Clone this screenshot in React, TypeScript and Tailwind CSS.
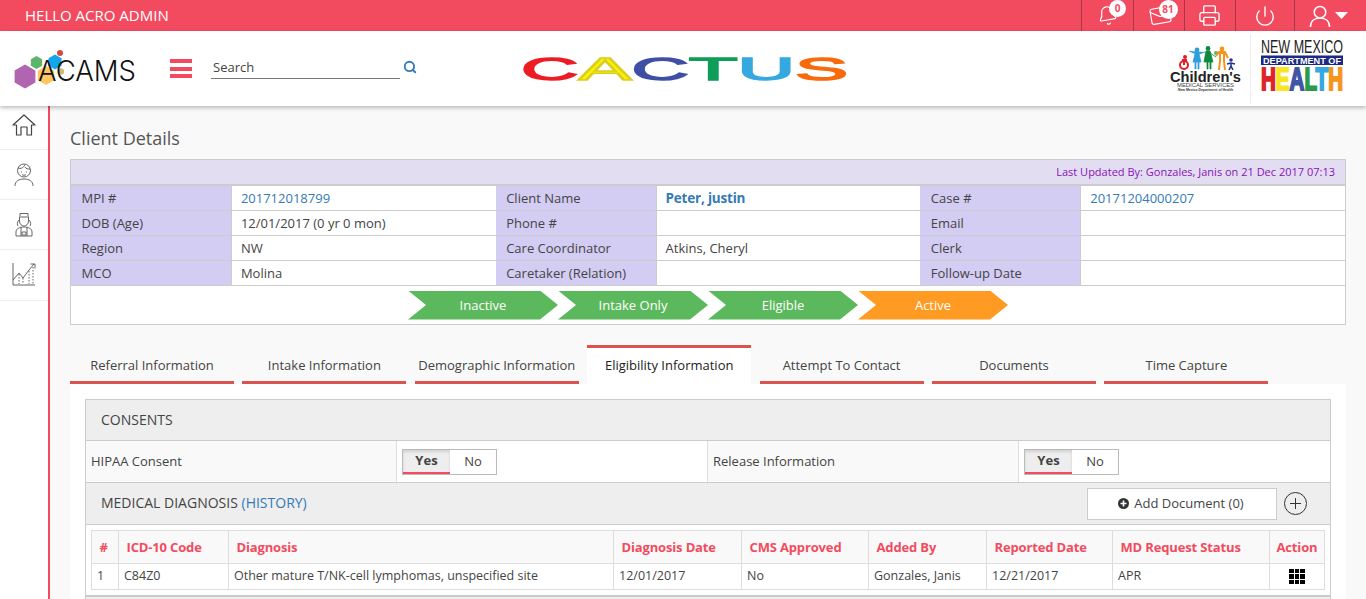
import { Bell, Mail, Printer, Power, Search } from 'lucide-react';

const infoRows = [
  ['MPI #', '201712018799', 'Client Name', 'Peter, justin', 'Case #', '20171204000207'],
  ['DOB (Age)', '12/01/2017 (0 yr 0 mon)', 'Phone #', '', 'Email', ''],
  ['Region', 'NW', 'Care Coordinator', 'Atkins, Cheryl', 'Clerk', ''],
  ['MCO', 'Molina', 'Caretaker (Relation)', '', 'Follow-up Date', ''],
];

const steps = [
  { label: 'Inactive', active: false },
  { label: 'Intake Only', active: false },
  { label: 'Eligible', active: false },
  { label: 'Active', active: true },
];

const tabs = [
  'Referral Information',
  'Intake Information',
  'Demographic Information',
  'Eligibility Information',
  'Attempt To Contact',
  'Documents',
  'Time Capture',
];

const columns = [
  { title: '#', width: 'w-[27px]', value: '1' },
  { title: 'ICD-10 Code', width: 'w-[110px]', value: 'C84Z0' },
  { title: 'Diagnosis', width: 'w-[385px]', value: 'Other mature T/NK-cell lymphomas, unspecified site' },
  { title: 'Diagnosis Date', width: 'w-[128px]', value: '12/01/2017' },
  { title: 'CMS Approved', width: 'w-[127px]', value: 'No' },
  { title: 'Added By', width: 'w-[118px]', value: 'Gonzales, Janis' },
  { title: 'Reported Date', width: 'w-[126px]', value: '12/21/2017' },
  { title: 'MD Request Status', width: 'w-[157px]', value: 'APR' },
];

function Hex({ cx, cy, r, fill }: { cx: number; cy: number; r: number; fill: string }) {
  const h = r * 0.866;
  return (
    <polygon
      points={`${cx},${cy - r} ${cx + h},${cy - r / 2} ${cx + h},${cy + r / 2} ${cx},${cy + r} ${cx - h},${cy + r / 2} ${cx - h},${cy - r / 2}`}
      fill={fill}
    />
  );
}

function AcamsLogo() {
  return (
    <svg width="124" height="44" viewBox="0 0 124 44" className="ml-[14px] shrink-0">
      <Hex cx={11} cy={29.5} r={12} fill="#b065b1" />
      <Hex cx={22.5} cy={15.5} r={6.5} fill="#5cb56a" />
      <Hex cx={41} cy={15} r={7.5} fill="#12a7e8" />
      <Hex cx={32} cy={28.5} r={9.5} fill="#fdc766" />
      <Hex cx={47} cy={24.5} r={3.5} fill="#d4b878" />
      <circle cx="46" cy="6" r="3" fill="#d9463f" />
      <text x="24" y="33.5" fontFamily="Inter, sans-serif" fontWeight="300" fontSize="28" fill="#111" textLength="98" lengthAdjust="spacingAndGlyphs">
        ACAMS
      </text>
    </svg>
  );
}

function CactusLogo() {
  return (
    <svg width="322" height="40" viewBox="0 0 322 40" className="shrink-0 overflow-visible">
      <text
        x="-3"
        y="31"
        fontFamily="'Liberation Sans', sans-serif"
        fontSize="32"
        strokeWidth="1.4"
        textLength="327"
        lengthAdjust="spacingAndGlyphs"
      >
        <tspan fill="#ed1c24" stroke="#ed1c24">C</tspan>
        <tspan fill="#fff200" stroke="#d8cf20">A</tspan>
        <tspan fill="#3f4fa5" stroke="#3f4fa5">C</tspan>
        <tspan fill="#0f9d58" stroke="#0f9d58">T</tspan>
        <tspan fill="#35a8e0" stroke="#35a8e0">U</tspan>
        <tspan fill="#f96a0c" stroke="#f96a0c">S</tspan>
      </text>
    </svg>
  );
}

function ChildrensLogo() {
  return (
    <svg width="72" height="46" viewBox="0 0 72 46" className="shrink-0 overflow-visible">
      {/* wheelchair kid */}
      <circle cx="15" cy="11" r="2" fill="#e31e26" />
      <circle cx="14" cy="19" r="4" fill="none" stroke="#e31e26" strokeWidth="2" />
      <path d="M12 14h5M14 13v6" stroke="#e31e26" strokeWidth="2" />
      {/* blue girl */}
      <circle cx="27" cy="4" r="2.4" fill="#2d9fd9" />
      <path d="M19 5l7 3h3l6-2M25 8h4l2 8h-2v7h-1v-7h-2v7h-1v-7h-2z" fill="#2d9fd9" stroke="#2d9fd9" strokeWidth="0.8" />
      {/* green girl */}
      <circle cx="38" cy="2.500" r="2.4" fill="#0e8a3e" />
      <path d="M36 5h4l3 11h-2v7h-1v-7h-2v7h-1v-7h-3zM40 7l6 4" fill="#0e8a3e" stroke="#0e8a3e" strokeWidth="0.8" />
      <circle cx="46" cy="7" r="2" fill="#5cb56a" />
      {/* orange adult */}
      <circle cx="52" cy="3" r="2.4" fill="#f7941d" />
      <path d="M46 10l3-4h6l3 6M50 7h4v8l1 9M50 7v8l-1 9" fill="none" stroke="#f7941d" strokeWidth="2" />
      {/* small navy kid */}
      <circle cx="61" cy="14" r="1.8" fill="#23358f" />
      <path d="M57 18l4-1 4 1M61 17v3l-2 4M61 20l2 4" fill="none" stroke="#23358f" strokeWidth="1.6" />
      <text x="0" y="36" fontFamily="'Liberation Sans', sans-serif" fontWeight="700" fontSize="15.500" fill="#222" textLength="71" lengthAdjust="spacingAndGlyphs">
        Children's
      </text>
      <text x="7" y="41" fontFamily="'Liberation Sans', sans-serif" fontSize="6" fill="#444" textLength="57" lengthAdjust="spacingAndGlyphs">
        MEDICAL SERVICES
      </text>
      <text x="8" y="44.500" fontFamily="'Liberation Sans', sans-serif" fontWeight="700" fontSize="3.500" fill="#333" textLength="55" lengthAdjust="spacingAndGlyphs">
        New Mexico Department of Health
      </text>
    </svg>
  );
}

function HealthLogo() {
  return (
    <svg width="82" height="52" viewBox="0 0 82 52" className="mb-[5px] shrink-0 overflow-visible">
      <text x="0" y="13" fontFamily="'Liberation Sans', sans-serif" fontSize="17.500" fill="#222" textLength="82" lengthAdjust="spacingAndGlyphs">
        NEW MEXICO
      </text>
      <rect x="0" y="15.500" width="82" height="9.500" fill="#1c2a80" />
      <text x="2" y="23.500" fontFamily="'Liberation Sans', sans-serif" fontWeight="700" fontSize="9.500" fill="#fff" textLength="78" lengthAdjust="spacingAndGlyphs">
        DEPARTMENT OF
      </text>
      <text
        x="0"
        y="50"
        fontFamily="'Liberation Sans', sans-serif"
        fontWeight="700"
        fontSize="31"
        strokeWidth="2"
        textLength="82"
        lengthAdjust="spacingAndGlyphs"
      >
        <tspan fill="#e0232a" stroke="#e0232a">H</tspan>
        <tspan fill="#f7e723" stroke="#f7e723">E</tspan>
        <tspan fill="#3f56a6" stroke="#3f56a6">A</tspan>
        <tspan fill="#2c9b47" stroke="#2c9b47">L</tspan>
        <tspan fill="#35a8e0" stroke="#35a8e0">T</tspan>
        <tspan fill="#f7941d" stroke="#f7941d">H</tspan>
      </text>
    </svg>
  );
}

function HomeIcon() {
  return (
    <svg width="24" height="22" viewBox="0 0 24 22" fill="none" stroke="#444" strokeWidth="1.2">
      <path d="M1 11L12 1l11 10h-3.5v10h-4.5v-8H9v8H4.5V11z" strokeLinejoin="round" />
    </svg>
  );
}

function ChildIcon() {
  return (
    <svg width="20" height="24" viewBox="0 0 20 24" fill="none" stroke="#555" strokeWidth="0.9">
      <circle cx="10" cy="7.5" r="6.5" />
      <path d="M4 5c3 1 5 0 7-3M11 4c1 2 3 2 5 2M7 9h1M12 9h1M8 11.5c1 1 3 1 4 0" />
      <path d="M1 23c0-5 4-7 9-7s9 2 9 7" />
    </svg>
  );
}

function NurseIcon() {
  return (
    <svg width="18" height="25" viewBox="0 0 18 25" fill="none" stroke="#555" strokeWidth="0.9">
      <path d="M5 4V1.500h8V4M4 5h10" />
      <path d="M4.500 5v4c0 3 2 5 4.500 5s4.500-2 4.500-5V5" />
      <path d="M4 8c-2 2-2 5-1 6M14 8c2 2 2 5 1 6" />
      <path d="M1 24v-4c0-3 3-5 8-5s8 2 8 5v4z" />
      <path d="M6 15v9M12 15v9M7 20h4v3H7z" />
    </svg>
  );
}

function ChartIcon() {
  return (
    <svg width="24" height="24" viewBox="0 0 24 24" fill="none" stroke="#555" strokeWidth="0.9">
      <path d="M1 1v22h22" />
      <path d="M1 18l6-7 4 5 6-8 5-6M18.500 2H23v4.500" />
      <path d="M7 12v10M11 16v6M17 9v13M21 5v17" strokeDasharray="1.500 1.500" />
    </svg>
  );
}

function Toggle() {
  return (
    <div className="flex h-[26px] w-[95px] border border-[#bbbbbb] bg-white text-[13px] text-[#444]">
      <div className="flex w-[47px] items-center justify-center border-b-2 border-[#f24b60] bg-[#eeeeee] font-bold shadow-[inset_0_2px_3px_rgba(0,0,0,0.12)]">
        Yes
      </div>
      <div className="flex flex-1 items-center justify-center">No</div>
    </div>
  );
}

export default function App() {
  return (
    <div className="flex h-[599px] w-[1366px] flex-col overflow-hidden bg-[#f9f9f9] font-['Open_Sans',sans-serif] text-[13px] text-[#444]">
      {/* Top bar */}
      <div className="flex h-[31px] shrink-0 items-center justify-between bg-[#f24b60] text-white">
        <span className="pl-[25px] text-[15px]">HELLO ACRO ADMIN</span>
        <div className="flex h-full">
          <div className="flex h-full w-[52px] items-center justify-center border-l border-[#a93645]">
            <div className="relative">
              <Bell size={21} strokeWidth={1.3} className="rotate-[-10deg]" />
              <span className="absolute left-[12px] top-[-5px] flex h-[17px] w-[17px] items-center justify-center rounded-full bg-white text-[10px] font-bold text-[#f24b60]">
                0
              </span>
            </div>
          </div>
          <div className="flex h-full w-[51px] items-center justify-center border-l border-[#a93645]">
            <div className="relative ml-[2px]">
              <Mail size={23} strokeWidth={1.2} className="rotate-[-10deg]" />
              <span className="absolute left-[10px] top-[-4px] flex h-[19px] w-[19px] items-center justify-center rounded-full bg-white text-[10px] font-bold text-[#f24b60]">
                81
              </span>
            </div>
          </div>
          <div className="flex h-full w-[51px] items-center justify-center border-l border-[#a93645]">
            <Printer size={23} strokeWidth={1.4} className="-ml-[2px]" />
          </div>
          <div className="flex h-full w-[59px] items-center justify-center border-l border-[#a93645]">
            <Power size={22} strokeWidth={1.5} />
          </div>
          <div className="flex h-full w-[72px] items-center gap-[4px] border-l border-[#a93645] pl-[14px]">
            <svg width="22" height="22" viewBox="0 0 22 23" fill="none" stroke="white" strokeWidth="1.600">
              <circle cx="11" cy="7.500" r="6" />
              <path d="M1 23c0-6 4-9.500 10-9.500s10 3.500 10 9.500" />
            </svg>
            <svg width="13" height="7" viewBox="0 0 13 7" fill="white">
              <path d="M0 0h13L6.500 7z" />
            </svg>
          </div>
        </div>
      </div>

      {/* Header */}
      <div className="relative z-10 flex h-[75px] shrink-0 items-center bg-white shadow-[0_2px_4px_rgba(0,0,0,0.25)]">
        <AcamsLogo />
        <div className="ml-[32px] flex w-[22px] shrink-0 flex-col gap-[3.5px]">
          <span className="h-[4px] bg-[#f24b60]" />
          <span className="h-[4px] bg-[#f24b60]" />
          <span className="h-[4px] bg-[#f24b60]" />
        </div>
        <div className="mb-[2px] ml-[19px] flex w-[189px] shrink-0 border-b border-[#777777] pl-[2px]">
          <input placeholder="Search" className="h-[21px] w-full bg-transparent text-[13px] outline-none placeholder:text-[#444]" />
        </div>
        <Search size={14} strokeWidth={3.2} className="ml-[3px] mt-[-4px] shrink-0 text-[#337ab7]" />
        <div className="ml-[107px]">
          <CactusLogo />
        </div>
        <div className="ml-[324px]">
          <ChildrensLogo />
        </div>
        <div className="ml-[8px] flex h-[70px] items-center border-l border-[#eeeeee] pl-[10px]">
          <HealthLogo />
        </div>
      </div>

      <div className="flex min-h-0 flex-1">
        {/* Sidebar */}
        <div className="flex w-[50px] shrink-0 flex-col border-r-2 border-[#f24b60] bg-white">
          <div className="flex h-[44px] items-center justify-center border-b border-[#eeeeee] pb-[6px]">
            <HomeIcon />
          </div>
          <div className="flex h-[50px] items-center justify-center border-b border-[#eeeeee]">
            <ChildIcon />
          </div>
          <div className="flex h-[50px] items-center justify-center border-b border-[#eeeeee]">
            <NurseIcon />
          </div>
          <div className="flex h-[51px] items-center justify-center border-b border-[#eeeeee] pb-[2px]">
            <ChartIcon />
          </div>
        </div>

        {/* Main */}
        <div className="min-w-0 flex-1 pl-5 pr-5 pt-[19px]">
          <h1 className="mb-[8px] text-[18px] leading-[26px] text-[#555]">Client Details</h1>

          {/* Client panel */}
          <div className="border border-[#cccccc] bg-white">
            <div className="flex h-[26px] items-center justify-end border-b-2 border-[#cccccc] bg-[#e2ddf1] pr-[10px] text-[11px] text-[#8a12b8]">
              Last Updated By: Gonzales, Janis on 21 Dec 2017 07:13
            </div>
            {infoRows.map((row) => (
              <div key={row[0]} className="flex h-[25px] border-b border-[#cccccc]">
                {row.map((cell, i) =>
                  i % 2 === 0 ? (
                    <div key={i} className="flex w-[160px] items-center bg-[#d3ccf3] pl-[10.5px] pt-[1px] text-[#444]">
                      {cell}
                    </div>
                  ) : (
                    <div
                      key={i}
                      className={`flex w-[265px] items-center border-l border-[#cccccc] pl-[9px] pt-[1px] ${
                        cell === 'Peter, justin'
                          ? 'text-[13.500px] font-bold tracking-[-0.2px] text-[#337ab7]'
                          : /^\d+$/.test(cell)
                            ? 'text-[#337ab7]'
                            : 'text-[#444]'
                      }`}
                    >
                      {cell}
                    </div>
                  ),
                )}
              </div>
            ))}
            <div className="flex h-[38px] items-center justify-center">
              {steps.map((step) => (
                <div
                  key={step.label}
                  className={`flex h-[29px] w-[150px] items-center justify-center pt-[1px] text-white [clip-path:polygon(0_0,132px_0,100%_50%,132px_100%,0_100%,18px_50%)] ${
                    step.active ? 'bg-[#ff9a22]' : 'bg-[#5cb85c]'
                  }`}
                >
                  {step.label}
                </div>
              ))}
            </div>
          </div>

          {/* Tabs */}
          <div className="mt-5 flex gap-[8.4px]">
            {tabs.map((tab) =>
              tab === 'Eligibility Information' ? (
                <div key={tab} className="flex h-[39px] w-[164px] items-center justify-center border-t-[3px] border-[#d9534f] bg-white pb-[1px] text-[#222]">
                  {tab}
                </div>
              ) : (
                <div key={tab} className="flex h-[39px] w-[164px] items-center justify-center whitespace-nowrap border-b-[3px] border-[#d9534f] pt-[6px] text-[#444]">
                  {tab}
                </div>
              ),
            )}
          </div>

          {/* Eligibility panel */}
          <div className="h-[300px] bg-white p-[15px]">
            <div className="border border-[#cccccc]">
              <div className="flex h-[41px] items-center border-b border-[#cccccc] bg-[#eeeeee] pb-[1px] pl-[15px] text-[14px]">CONSENTS</div>
              <div className="flex h-[42px] border-b border-[#cccccc]">
                <div className="flex w-[311px] items-center border-r border-[#dddddd] bg-[#f9f9f9] pl-[5px]">HIPAA Consent</div>
                <div className="flex w-[311px] items-center border-r border-[#dddddd] pl-[5px]">
                  <Toggle />
                </div>
                <div className="flex w-[311px] items-center border-r border-[#dddddd] bg-[#f9f9f9] pl-[5px]">Release Information</div>
                <div className="flex w-[311px] items-center pl-[5px]">
                  <Toggle />
                </div>
              </div>
              <div className="flex h-[42px] items-center justify-between border-b border-[#cccccc] bg-[#eeeeee] pl-[15px] pr-[23px] text-[14px]">
                <span className="mb-[2px]">
                  MEDICAL DIAGNOSIS <span className="text-[#337ab7]">(HISTORY)</span>
                </span>
                <div className="flex items-center gap-[7px]">
                  <div className="flex h-[32px] w-[190px] items-center justify-center gap-[5px] border border-[#cccccc] bg-white pr-[2px] text-[13px]">
                    <svg width="11" height="11" viewBox="0 0 11 11">
                      <circle cx="5.500" cy="5.500" r="5.500" fill="#333" />
                      <path d="M5.500 2.500v6M2.500 5.500h6" stroke="white" strokeWidth="1.600" />
                    </svg>
                    Add Document (0)
                  </div>
                  <svg width="23" height="23" viewBox="0 0 23 23" fill="none" stroke="#333" strokeWidth="1">
                    <circle cx="11.500" cy="11.500" r="11" />
                    <path d="M11.500 6v11M6 11.500h11" />
                  </svg>
                </div>
              </div>

              {/* Diagnosis table */}
              <div className="p-[5px]">
                <div className="border border-[#dddddd]">
                  <div className="flex h-[33px] border-b border-[#dddddd] bg-[#f9f9f9] text-[13px] font-bold tracking-[-0.15px] text-[#f24b60]">
                    {columns.map((col) => (
                      <div key={col.title} className={`flex items-center whitespace-nowrap border-r border-[#dddddd] pl-[7.5px] pt-[1px] ${col.width}`}>
                        {col.title}
                      </div>
                    ))}
                    <div className="flex flex-1 items-center justify-center pt-[1px]">Action</div>
                  </div>
                  <div className="flex h-[25px] text-[12.500px]">
                    {columns.map((col) => (
                      <div key={col.title} className={`flex items-center whitespace-nowrap border-r border-[#dddddd] pl-[5px] ${col.width}`}>
                        {col.value}
                      </div>
                    ))}
                    <div className="flex flex-1 items-center justify-center">
                      <div className="grid grid-cols-3 gap-[1px]">
                        {Array.from({ length: 9 }).map((_, i) => (
                          <span key={i} className="h-[4.500px] w-[4.500px] bg-black" />
                        ))}
                      </div>
                    </div>
                  </div>
                </div>
              </div>
              <div className="h-[40px] border-t-2 border-[#cccccc] bg-[#eeeeee]" />
            </div>
          </div>
        </div>
      </div>
    </div>
  );
}
